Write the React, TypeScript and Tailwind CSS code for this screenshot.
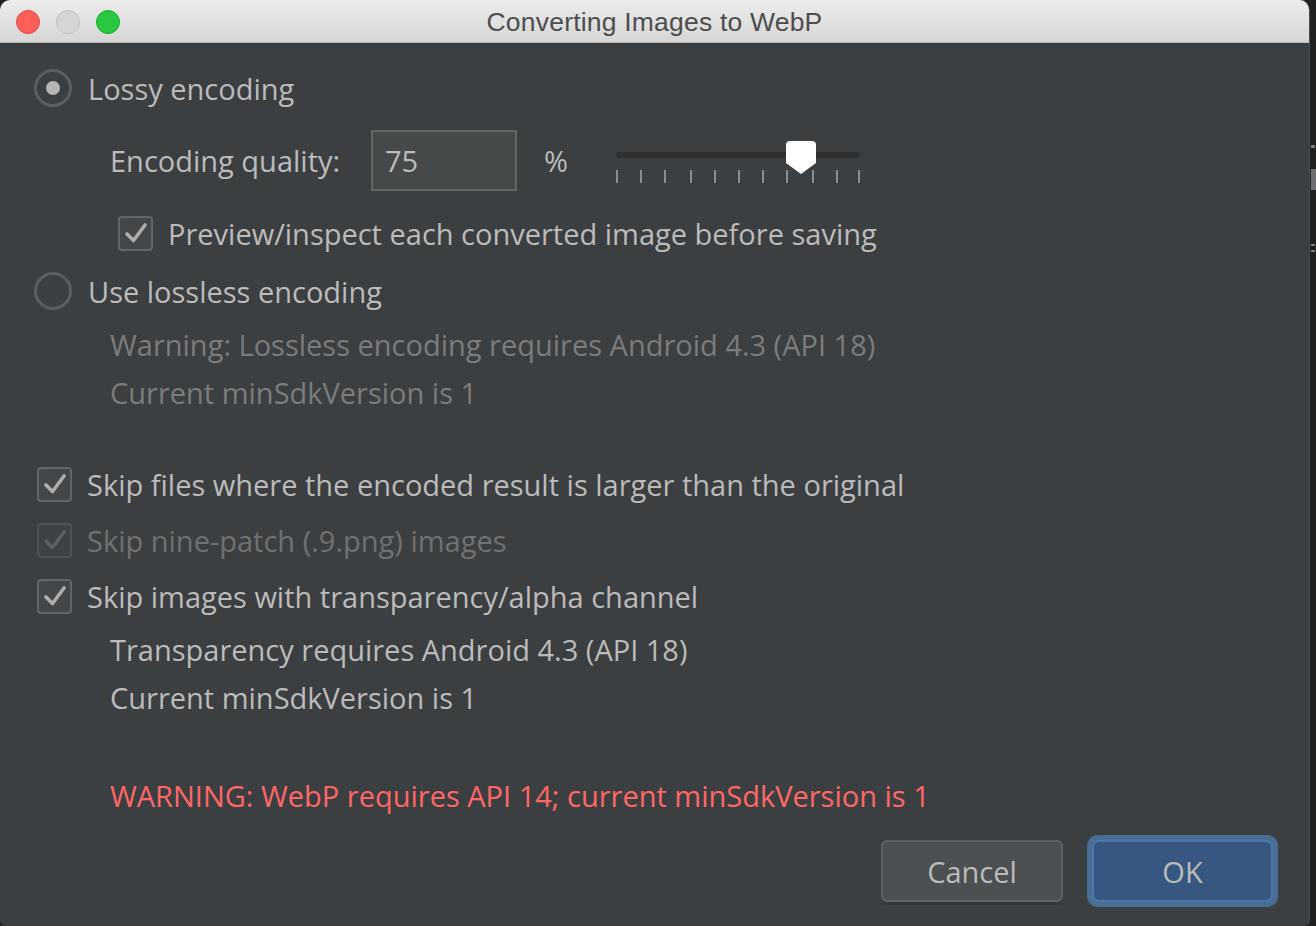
import React from "react";

const FONT = { fontFamily: '"Open Sans", "Noto Sans", sans-serif' };

function Radio({ checked }: { checked?: boolean }) {
  return (
    <div className="w-[38px] h-[38px] rounded-full border-[3px] border-[#5b5e60] bg-[#3c3f41] flex items-center justify-center shrink-0">
      {checked && <div className="w-[14px] h-[14px] rounded-full bg-[#b5b5b5]" />}
    </div>
  );
}

function Check({ disabled }: { disabled?: boolean }) {
  return (
    <div
      className={
        "w-[35px] h-[35px] rounded-[4px] border-[2px] flex items-center justify-center shrink-0 " +
        (disabled ? "border-[#4f5254] bg-[#3e4244]" : "border-[#626567] bg-[#43474a]")
      }
    >
      <svg width="24" height="22" viewBox="0 0 24 22">
        <path
          d="M3 12 L9.5 18.5 L21 3"
          fill="none"
          stroke={disabled ? "#5d6062" : "#adadad"}
          strokeWidth="3.6"
          strokeLinecap="round"
          strokeLinejoin="round"
        />
      </svg>
    </div>
  );
}

function Slider() {
  const ticks = [0, 24, 48, 74, 98, 122, 146, 170, 196, 220, 242];
  return (
    <div className="relative w-[246px] h-[60px]">
      <div className="absolute left-0 top-[21px] w-[244px] h-[6px] rounded-full bg-[#2e3032]" />
      {ticks.map((t) => (
        <div key={t} className="absolute top-[39px] w-[2px] h-[13px] bg-[#8a8c8e]" style={{ left: t }} />
      ))}
      <svg className="absolute left-[169px] top-[9px]" width="32" height="36" viewBox="0 0 32 36">
        <path d="M5 1 H27 Q31 1 31 5 V23 L16 34 L1 23 V5 Q1 1 5 1 Z" fill="#ffffff" />
      </svg>
    </div>
  );
}

export default function App() {
  return (
    <div className="w-[1316px] h-[926px] bg-[#1f2022] flex overflow-hidden" style={FONT}>
      <div className="w-[1310px] h-[926px] flex flex-col rounded-t-[10px] rounded-b-[6px] overflow-hidden bg-[#3c3f41] border-r border-[#4a4d50]">
        {/* Title bar */}
        <div className="h-[43px] shrink-0 bg-gradient-to-b from-[#ececec] to-[#d6d6d6] border-b border-[#b9b9b9] relative flex items-center justify-center pt-[3px]">
          <div className="absolute left-[16px] top-[10px] flex gap-[16px]">
            <div className="w-[24px] h-[24px] rounded-full bg-[#fe5f57] border border-[#e2463f]" />
            <div className="w-[24px] h-[24px] rounded-full bg-[#d5d5d5] border border-[#c2c2c2]" />
            <div className="w-[24px] h-[24px] rounded-full bg-[#29c840] border border-[#1aac2c]" />
          </div>
          <div
            className="text-[26.5px] text-[#4d4d4d] tracking-[0.2px]"
            style={{ fontFamily: '"Liberation Sans", Arial, sans-serif' }}
          >
            Converting Images to WebP
          </div>
        </div>

        {/* Body */}
        <div className="flex flex-col text-[29px] text-[#bbbbbb] leading-none">
          <div className="mt-[25px] h-[40px] flex items-center pl-[34px] gap-[16px]">
            <Radio checked />
            <span>Lossy encoding</span>
          </div>

          <div className="mt-[22px] h-[61px] flex items-center pl-[110px]">
            <span className="w-[261px]">Encoding quality:</span>
            <div className="w-[146px] h-[61px] border-[2px] border-[#646668] bg-[#45494a] flex items-center pl-[12px]">
              75
            </div>
            <span className="ml-[27px] w-[72px]">%</span>
            <Slider />
          </div>

          <div className="mt-[24px] h-[36px] flex items-center pl-[118px] gap-[15px]">
            <Check />
            <span>Preview/inspect each converted image before saving</span>
          </div>

          <div className="mt-[20px] h-[40px] flex items-center pl-[34px] gap-[16px]">
            <Radio />
            <span>Use lossless encoding</span>
          </div>

          <div className="mt-[13px] h-[40px] flex items-center pl-[110px] text-[#7a7c7e]">
            Warning: Lossless encoding requires Android 4.3 (API 18)
          </div>
          <div className="mt-[8px] h-[40px] flex items-center pl-[110px] text-[#7a7c7e]">
            Current minSdkVersion is 1
          </div>

          <div className="mt-[52px] h-[40px] flex items-center pl-[37px] gap-[15px]">
            <Check />
            <span>Skip files where the encoded result is larger than the original</span>
          </div>
          <div className="mt-[16px] h-[40px] flex items-center pl-[37px] gap-[15px]">
            <Check disabled />
            <span className="text-[#6f7173]">Skip nine-patch (.9.png) images</span>
          </div>
          <div className="mt-[16px] h-[40px] flex items-center pl-[37px] gap-[15px]">
            <Check />
            <span>Skip images with transparency/alpha channel</span>
          </div>

          <div className="mt-[13px] h-[40px] flex items-center pl-[110px]">
            Transparency requires Android 4.3 (API 18)
          </div>
          <div className="mt-[8px] h-[40px] flex items-center pl-[110px]">
            Current minSdkVersion is 1
          </div>

          <div className="mt-[58px] h-[40px] flex items-center pl-[110px] text-[#ff6767]">
            WARNING: WebP requires API 14; current minSdkVersion is 1
          </div>

          <div className="mt-[20px] flex items-center justify-end pr-[31px] gap-[24px]">
            <div className="w-[182px] h-[62px] rounded-[6px] border-[2px] border-[#5e6163] bg-[#4c5052] flex items-center justify-center shadow-[0_3px_0_#34373a]">
              Cancel
            </div>
            <div className="w-[191px] h-[72px] rounded-[11px] bg-[#476e96] p-[5px]">
              <div className="w-full h-full rounded-[7px] border-[2px] border-[#4f76a0] bg-[#365880] flex items-center justify-center">
                OK
              </div>
            </div>
          </div>
        </div>
      </div>
      <div className="flex-1 relative">
        <div className="absolute left-[1px] top-[145px] w-[4px] h-[3px] bg-[#7a8088]" />
        <div className="absolute left-[1px] top-[169px] w-[5px] h-[21px] bg-[#6d6f72]" />
        <div className="absolute left-[1px] top-[244px] w-[4px] h-[2px] bg-[#7a8088]" />
        <div className="absolute left-[1px] top-[250px] w-[4px] h-[2px] bg-[#7a8088]" />
      </div>
    </div>
  );
}
